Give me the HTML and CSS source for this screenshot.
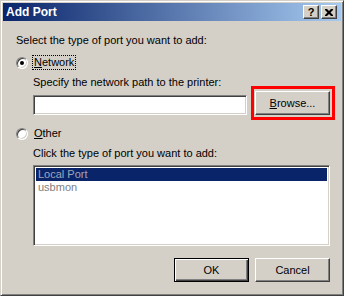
FILE: index.html
```html
<!DOCTYPE html>
<html>
<head>
<meta charset="utf-8">
<link rel="stylesheet" href="styles.css">
</head>
<body>
<div class="window">
  <div class="titlebar">
    <span class="title">Add Port</span>
    <div class="tb-buttons">
      <span class="tb-btn help">?</span>
      <span class="tb-btn close"><svg width="8" height="7" viewBox="0 0 8 7"><path d="M0 0h2l2 2l2-2h2v1l-2.5 2.5L8 6v1H6L4 5L2 7H0V6l2.5-2.5L0 1z" fill="#000"/></svg></span>
    </div>
  </div>
  <div class="body">
    <div class="line intro">Select the type of port you want to add:</div>
    <div class="radio-row first">
      <span class="radio"><span class="dot"></span></span>
      <span class="label focus"><u>N</u>etwork</span>
    </div>
    <div class="indent">
      <div class="line spec">Specify the network path to the printer:</div>
      <div class="path-row">
        <div class="textbox"></div>
        <div class="browse-wrap">
          <button class="btn browse"><u>B</u>rowse...</button>
          <span class="highlight"></span>
        </div>
      </div>
    </div>
    <div class="radio-row second">
      <span class="radio"></span>
      <span class="label"><u>O</u>ther</span>
    </div>
    <div class="indent">
      <div class="line click">Click the type of port you want to add:</div>
      <div class="listbox">
        <div class="item selected">Local Port</div>
        <div class="item">usbmon</div>
      </div>
    </div>
    <div class="footer">
      <button class="btn default">OK</button>
      <button class="btn">Cancel</button>
    </div>
  </div>
</div>
</body>
</html>
```
FILE: styles.css
```css
html, body {
  margin: 0;
  padding: 0;
  background: #d4d0c8;
}
body {
  font-family: "Liberation Sans", Arial, sans-serif;
  font-size: 11px;
  color: #000;
}
.window {
  width: 344px;
  height: 296px;
  box-sizing: border-box;
  background: #d4d0c8;
  border: 1px solid;
  border-color: #d4d0c8 #404040 #404040 #d4d0c8;
  box-shadow: inset 1px 1px 0 #fff, inset -1px -1px 0 #808080;
  padding: 2px;
  display: flex;
  flex-direction: column;
}
.titlebar {
  height: 18px;
  background: linear-gradient(to right, #0a246a, #a6caf0);
  display: flex;
  align-items: center;
  justify-content: space-between;
  padding: 0 4px 0 3px;
}
.title {
  color: #fff;
  font-weight: bold;
  font-size: 12px;
}
.tb-buttons {
  display: flex;
  gap: 2px;
}
.tb-btn {
  width: 16px;
  height: 14px;
  box-sizing: border-box;
  background: #d4d0c8;
  border: 1px solid;
  border-color: #fff #404040 #404040 #fff;
  box-shadow: inset -1px -1px 0 #808080;
  display: flex;
  align-items: center;
  justify-content: center;
}
.tb-btn.help {
  font-weight: bold;
  font-size: 11px;
  line-height: 12px;
  padding-bottom: 1px;
}
.body {
  flex: 1;
  padding: 0 11px 0 13px;
  display: flex;
  flex-direction: column;
}
.line {
  height: 13px;
  line-height: 13px;
  white-space: nowrap;
}
.intro {
  margin-top: 13px;
}
.radio-row {
  height: 15px;
  display: flex;
  align-items: center;
}
.radio-row.first {
  margin-top: 8px;
}
.radio-row.second {
  margin-top: 11px;
}
.radio {
  width: 12px;
  height: 12px;
  box-sizing: border-box;
  border-radius: 50%;
  background: #fff;
  border: 1px solid;
  border-color: #808080 #fff #fff #808080;
  box-shadow: inset 1px 1px 0 #404040, inset -1px -1px 0 #d4d0c8;
  display: flex;
  align-items: center;
  justify-content: center;
}
.dot {
  width: 4px;
  height: 4px;
  border-radius: 50%;
  background: #000;
}
.label {
  margin-left: 4px;
  height: 13px;
  line-height: 13px;
  padding: 0 1px;
  border: 1px dotted transparent;
}
.label.focus {
  border-color: #000;
}
.indent {
  padding-left: 17px;
  display: flex;
  flex-direction: column;
}
.spec {
  margin-top: 6px;
}
.path-row {
  margin-top: 2px;
  display: flex;
  align-items: flex-start;
  gap: 8px;
}
.textbox {
  width: 214px;
  height: 20px;
  margin-top: 4px;
  box-sizing: border-box;
  background: #fff;
  border: 1px solid;
  border-color: #808080 #fff #fff #808080;
  box-shadow: inset 1px 1px 0 #404040, inset -1px -1px 0 #d4d0c8;
}
.browse-wrap {
  position: relative;
  display: flex;
}
.highlight {
  position: absolute;
  left: -4px;
  right: -5px;
  top: -5px;
  bottom: -5px;
  border: 3px solid #f00;
  pointer-events: none;
}
.btn {
  width: 75px;
  height: 24px;
  box-sizing: border-box;
  margin: 0;
  padding: 0;
  font-family: "Liberation Sans", Arial, sans-serif;
  font-size: 11px;
  color: #000;
  background: #d4d0c8;
  border: 1px solid;
  border-color: #fff #404040 #404040 #fff;
  box-shadow: inset -1px -1px 0 #808080;
  border-radius: 0;
}
.btn.default {
  border: 1px solid #000;
  box-shadow: inset 1px 1px 0 #fff, inset -1px -1px 0 #404040, inset -2px -2px 0 #808080;
}
.click {
  margin-top: 6px;
}
.listbox {
  margin-top: 5px;
  height: 81px;
  box-sizing: border-box;
  background: #fff;
  border: 1px solid;
  border-color: #808080 #fff #fff #808080;
  box-shadow: inset 1px 1px 0 #404040, inset -1px -1px 0 #d4d0c8;
  padding: 2px 2px;
}
.item {
  height: 13px;
  line-height: 13px;
  padding-left: 2px;
  color: #808080;
}
.item.selected {
  background: #0a246a;
  color: #a0a4b8;
}
.footer {
  margin-top: 12px;
  display: flex;
  justify-content: flex-end;
  gap: 6px;
}
```
